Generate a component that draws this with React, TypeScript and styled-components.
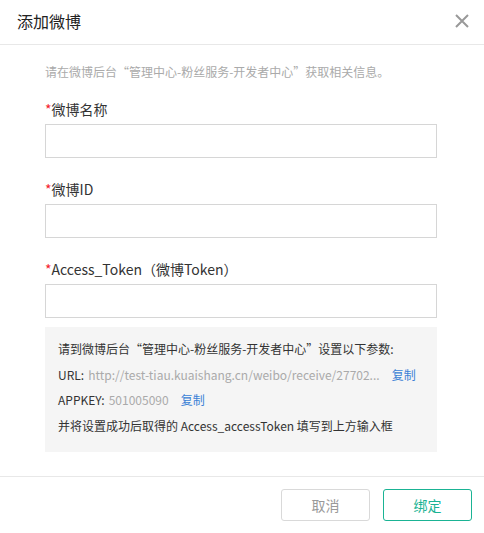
import React from 'react'
import styled, { createGlobalStyle } from 'styled-components'

const GlobalStyle = createGlobalStyle`
  html, body {
    margin: 0;
    padding: 0;
    background: #fff;
  }
  * {
    box-sizing: border-box;
  }
  body {
    font-family: "Noto Sans CJK SC", "Noto Sans", sans-serif;
    color: #333;
  }
`

const Modal = styled.div`
  width: 484px;
  height: 533px;
  display: flex;
  flex-direction: column;
  background: #fff;
`

const Header = styled.div`
  height: 45px;
  display: flex;
  align-items: center;
  justify-content: space-between;
  padding: 0 14px 2px 17px;
  border-bottom: 1px solid #e8e8e8;
`

const Title = styled.div`
  font-size: 16px;
  color: #222;
`

const CloseButton = styled.button`
  border: none;
  background: none;
  padding: 0;
  width: 16px;
  height: 16px;
  display: flex;
  align-items: center;
  justify-content: center;
  cursor: pointer;
`

const Body = styled.div`
  flex: 1;
  padding: 17px 47px 0 45px;
  display: flex;
  flex-direction: column;
`

const Hint = styled.div`
  font-size: 12px;
  line-height: 20px;
  color: #aaa;
  margin-bottom: 17px;
`

const FieldList = styled.div`
  display: flex;
  flex-direction: column;
  gap: 21px;
  margin-bottom: 9px;
`

const Field = styled.div`
  display: flex;
  flex-direction: column;
  gap: 5px;
`

const Label = styled.label`
  font-size: 14px;
  line-height: 20px;
  color: #333;

  & > em {
    font-style: normal;
    color: #f5222d;
  }
`

const Input = styled.input`
  height: 34px;
  width: 100%;
  border: 1px solid #d6d6d6;
  border-radius: 0;
  padding: 0 10px;
  font-size: 13px;
  font-family: inherit;
  outline: none;
`

const InfoBox = styled.div`
  background: #f5f5f5;
  padding: 9px 13px 14px;
  font-size: 12px;
  line-height: 25.5px;
  color: #333;
`

const InfoLine = styled.div`
  display: flex;
  align-items: center;
  white-space: nowrap;
`

const Value = styled.span`
  color: #aaa;
  margin-left: 4px;
  white-space: nowrap;
`

const CopyLink = styled.a`
  color: #3b82d6;
  margin-left: 12px;
  text-decoration: none;
  cursor: pointer;
`

const Footer = styled.div`
  height: 57px;
  border-top: 1px solid #e8e8e8;
  display: flex;
  justify-content: flex-end;
  align-items: flex-start;
  gap: 13px;
  padding: 12px 12px 0 0;
`

const Button = styled.button<{ $primary?: boolean }>`
  width: 89px;
  height: 32px;
  border-radius: 3px;
  background: #fff;
  font-size: 14px;
  font-family: inherit;
  cursor: pointer;
  border: 1px solid ${(p) => (p.$primary ? '#1ab394' : '#d9d9d9')};
  color: ${(p) => (p.$primary ? '#1ab394' : '#999')};
`

const fields = ['微博名称', '微博ID', 'Access_Token（微博Token）']

const receiveUrl = 'http://test-tiau.kuaishang.cn/weibo/receive/2770215846395'
const shorten = (s: string, n: number) => (s.length > n ? s.slice(0, n) + '...' : s)

export default function App() {
  return (
    <Modal>
      <GlobalStyle />
      <Header>
        <Title>添加微博</Title>
        <CloseButton aria-label="关闭">
          <svg width="14" height="14" viewBox="0 0 14 14">
            <path
              d="M1 1 L13 13 M13 1 L1 13"
              stroke="#999"
              strokeWidth="2"
              fill="none"
            />
          </svg>
        </CloseButton>
      </Header>
      <Body>
        <Hint>请在微博后台“管理中心-粉丝服务-开发者中心”获取相关信息。</Hint>
        <FieldList>
          {fields.map((f) => (
            <Field key={f}>
              <Label>
                <em>*</em>
                {f}
              </Label>
              <Input />
            </Field>
          ))}
        </FieldList>
        <InfoBox>
          <InfoLine>请到微博后台“管理中心-粉丝服务-开发者中心”设置以下参数:</InfoLine>
          <InfoLine>
            URL:
            <Value>{shorten(receiveUrl, 49)}</Value>
            <CopyLink>复制</CopyLink>
          </InfoLine>
          <InfoLine>
            APPKEY:
            <Value>501005090</Value>
            <CopyLink>复制</CopyLink>
          </InfoLine>
          <InfoLine>并将设置成功后取得的 Access_accessToken 填写到上方输入框</InfoLine>
        </InfoBox>
      </Body>
      <Footer>
        <Button>取消</Button>
        <Button $primary>绑定</Button>
      </Footer>
    </Modal>
  )
}
